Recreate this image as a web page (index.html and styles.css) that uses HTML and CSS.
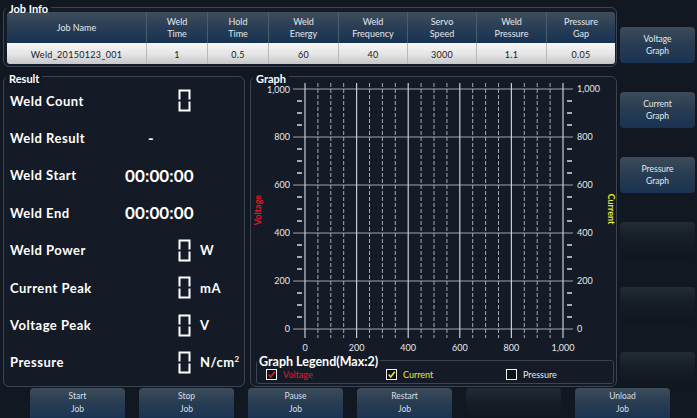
FILE: index.html
```html
<!DOCTYPE html>
<html>
<head>
<meta charset="utf-8">
<link rel="stylesheet" href="styles.css">
</head>
<body>
<div class="screen">
  <div class="main">
    <div class="panel job">
      <div class="ptitle">Job Info</div>
      <div class="jtable">
        <div class="jrow head">
          <div class="c">Job Name</div>
          <div class="c">Weld<br>Time</div>
          <div class="c">Hold<br>Time</div>
          <div class="c">Weld<br>Energy</div>
          <div class="c">Weld<br>Frequency</div>
          <div class="c">Servo<br>Speed</div>
          <div class="c">Weld<br>Pressure</div>
          <div class="c">Pressure<br>Gap</div>
        </div>
        <div class="jrow data">
          <div class="c">Weld_20150123_001</div>
          <div class="c">1</div>
          <div class="c">0.5</div>
          <div class="c">60</div>
          <div class="c">40</div>
          <div class="c">3000</div>
          <div class="c">1.1</div>
          <div class="c">0.05</div>
        </div>
      </div>
    </div>
    <div class="lower">
      <div class="panel result">
        <div class="ptitle">Result</div>
        <div class="rows">
          <div class="r"><span class="lbl">Weld Count</span><span class="val dig"><svg class="seg" viewBox="0 0 13 23"><path d="M1.5 10.5V1.5H11.5V10.5M11.5 12.5V21.5H1.5V12.5"/></svg></span></div>
          <div class="r"><span class="lbl">Weld Result</span><span class="val dash">-</span></div>
          <div class="r"><span class="lbl">Weld Start</span><span class="val time">00:00:00</span></div>
          <div class="r"><span class="lbl">Weld End</span><span class="val time">00:00:00</span></div>
          <div class="r"><span class="lbl">Weld Power</span><span class="val dig"><svg class="seg" viewBox="0 0 13 23"><path d="M1.5 10.5V1.5H11.5V10.5M11.5 12.5V21.5H1.5V12.5"/></svg></span><span class="unit">W</span></div>
          <div class="r"><span class="lbl">Current Peak</span><span class="val dig"><svg class="seg" viewBox="0 0 13 23"><path d="M1.5 10.5V1.5H11.5V10.5M11.5 12.5V21.5H1.5V12.5"/></svg></span><span class="unit">mA</span></div>
          <div class="r"><span class="lbl">Voltage Peak</span><span class="val dig"><svg class="seg" viewBox="0 0 13 23"><path d="M1.5 10.5V1.5H11.5V10.5M11.5 12.5V21.5H1.5V12.5"/></svg></span><span class="unit">V</span></div>
          <div class="r"><span class="lbl">Pressure</span><span class="val dig"><svg class="seg" viewBox="0 0 13 23"><path d="M1.5 10.5V1.5H11.5V10.5M11.5 12.5V21.5H1.5V12.5"/></svg></span><span class="unit">N/cm<sup>2</sup></span></div>
        </div>
      </div>
      <div class="panel graph">
        <div class="ptitle gtitle">Graph</div>
        <svg class="chart" width="365" height="276" viewBox="0 0 365 276">
          <g class="hgrid">
            <line x1="42" y1="9" x2="322" y2="9"/>
            <line x1="42" y1="57" x2="322" y2="57"/>
            <line x1="42" y1="105" x2="322" y2="105"/>
            <line x1="42" y1="153" x2="322" y2="153"/>
            <line x1="42" y1="201" x2="322" y2="201"/>
            <line x1="42" y1="249" x2="322" y2="249"/>
          </g>
          <g class="minor">
            <path d="M46 21h5M46 33h5M46 45h5M46 69h5M46 81h5M46 93h5M46 117h5M46 129h5M46 141h5M46 165h5M46 177h5M46 189h5M46 213h5M46 225h5M46 237h5"/>
            <path d="M316 21h5M316 33h5M316 45h5M316 69h5M316 81h5M316 93h5M316 117h5M316 129h5M316 141h5M316 165h5M316 177h5M316 189h5M316 213h5M316 225h5M316 237h5"/>
          </g>
          <g class="vdash">
            <path d="M66.9 3V258M79.8 3V258M92.7 3V258M118.5 3V258M131.4 3V258M144.3 3V258M170.1 3V258M183 3V258M195.9 3V258M221.7 3V258M234.6 3V258M247.5 3V258M273.3 3V258M286.2 3V258M299.1 3V258"/>
          </g>
          <g class="vsolid">
            <path d="M54 3V258M105.6 3V258M157.2 3V258M208.8 3V258M260.4 3V258M312 3V258"/>
          </g>
          <g class="lab ylab">
            <text x="39" y="12.5">1,000</text>
            <text x="39" y="60">800</text>
            <text x="39" y="108">600</text>
            <text x="39" y="156">400</text>
            <text x="39" y="204">200</text>
            <text x="39" y="252">0</text>
          </g>
          <g class="lab rlab">
            <text x="326" y="12">1,000</text>
            <text x="326" y="60">800</text>
            <text x="326" y="108">600</text>
            <text x="326" y="156">400</text>
            <text x="326" y="204">200</text>
            <text x="326" y="252">0</text>
          </g>
          <g class="lab xlab">
            <text x="54" y="271">0</text>
            <text x="105.6" y="271">200</text>
            <text x="157.2" y="271">400</text>
            <text x="208.8" y="271">600</text>
            <text x="260.4" y="271">800</text>
            <text x="312" y="271">1,000</text>
          </g>
          <text class="atitle volt" transform="translate(10 130) rotate(-90)">Voltage</text>
          <text class="atitle curr" transform="translate(357 129) rotate(90)">Current</text>
        </svg>
        <div class="legend">
          <div class="ltitle">Graph Legend(Max:2)</div>
          <div class="litems">
            <div class="li"><span class="cb"><svg viewBox="0 0 11 11"><path class="ck red" d="M2 5.5L4.5 8.5L9.5 2"/></svg></span><span class="lt red-t">Voltage</span></div>
            <div class="li"><span class="cb"><svg viewBox="0 0 11 11"><path class="ck yel" d="M2 5.5L4.5 8.5L9.5 2"/></svg></span><span class="lt yel-t">Current</span></div>
            <div class="li"><span class="cb"></span><span class="lt wht-t">Pressure</span></div>
          </div>
        </div>
      </div>
    </div>
  </div>
  <div class="side">
    <div class="sbtn">Voltage<br>Graph</div>
    <div class="sbtn">Current<br>Graph</div>
    <div class="sbtn">Pressure<br>Graph</div>
    <div class="sbtn dark"></div>
    <div class="sbtn dark"></div>
    <div class="sbtn dark"></div>
  </div>
  <div class="bottom">
    <div class="bbtn">Start<br>Job</div>
    <div class="bbtn">Stop<br>Job</div>
    <div class="bbtn">Pause<br>Job</div>
    <div class="bbtn">Restart<br>Job</div>
    <div class="bbtn dark"></div>
    <div class="bbtn">Unload<br>Job</div>
  </div>
</div>
</body>
</html>
```
FILE: styles.css
```css
html, body {
  margin: 0;
  padding: 0;
  background: #121822;
}
body {
  width: 697px;
  height: 418px;
  overflow: hidden;
  font-family: Lato, "DejaVu Sans", sans-serif;
  color: #fff;
}
.screen {
  display: grid;
  grid-template-columns: 620px 77px;
  grid-template-rows: 388px 30px;
  width: 697px;
  height: 418px;
}
.main {
  padding: 7px 0 0 3px;
  box-sizing: border-box;
}
.panel {
  border: 1px solid #3a4452;
  border-radius: 6px;
  background: #141b26;
  box-sizing: border-box;
}
.ptitle {
  display: block;
  width: max-content;
  font-weight: 700;
  font-size: 11px;
  line-height: 12px;
  height: 12px;
  padding: 0 3px 0 3px;
  margin: -5px 0 0 2px;
  background: #121822;
  color: #fff;
}
.job {
  width: 614px;
  height: 60px;
}
.jtable {
  margin: -3px 0 0 3px;
  width: 608px;
}
.jrow {
  display: grid;
  grid-template-columns: 139px 61px 61px 70px 69px 69px 70px 69px;
}
.head {
  height: 31px;
  background: linear-gradient(#3f4e5d 0%, #2b3f55 45%, #163252 100%);
  border-radius: 3px 3px 0 0;
}
.head .c {
  color: #e3e8ee;
  font-size: 9px;
  line-height: 12px;
  text-align: center;
  display: flex;
  align-items: center;
  justify-content: center;
  border-left: 1px solid #4d5d6e;
}
.head .c:first-child, .data .c:first-child {
  border-left: none;
}
.data {
  height: 21px;
  background: linear-gradient(#f7f7f7 0%, #e6e6e6 50%, #c6c7c9 100%);
  border-radius: 0 0 3px 3px;
}
.data .c {
  color: #1b1b1b;
  font-size: 9px;
  text-align: center;
  display: flex;
  align-items: center;
  justify-content: center;
  border-left: 1px solid #b8babd;
  padding-top: 1px;
  letter-spacing: 0.3px;
}
.lower {
  display: flex;
  gap: 5px;
  margin-top: 9px;
}
.result {
  width: 242px;
  height: 311px;
}
.result .ptitle, .graph .ptitle {
  margin-top: -4px;
}
.graph .gtitle {
  line-height: 11px;
  height: 11px;
  margin-bottom: 1px;
}
.rows {
  display: grid;
  grid-template-rows: repeat(8, 37.4px);
  margin-top: -3px;
}
.r {
  display: flex;
  align-items: center;
  padding-left: 6px;
}
.lbl {
  width: 115px;
  font-weight: 700;
  font-size: 13px;
  letter-spacing: 0.5px;
  color: #fff;
}
.val {
  font-weight: 700;
}
.dig {
  margin-left: 53px;
  width: 13px;
  height: 23px;
}
.seg {
  width: 13px;
  height: 23px;
  display: block;
}
.seg path {
  fill: none;
  stroke: #fff;
  stroke-width: 2;
}
.dash {
  margin-left: 23px;
  font-size: 15px;
}
.time {
  margin-left: 0;
  font-size: 17px;
  letter-spacing: 0.1px;
}
.unit {
  margin-left: 9px;
  font-weight: 700;
  font-size: 13px;
  letter-spacing: 0.5px;
}
.unit sup {
  font-size: 8px;
  vertical-align: 5px;
  line-height: 0;
}
.graph {
  width: 367px;
  height: 311px;
  display: flex;
  flex-direction: column;
}
.chart {
  display: block;
  margin-top: -5px;
}
.hgrid line {
  stroke: #9ea3a9;
  stroke-width: 1;
}
.minor path {
  stroke: #d8dadd;
  stroke-width: 1.3;
}
.vdash path {
  stroke: #a5aab0;
  stroke-width: 1;
  stroke-dasharray: 4 2;
}
.vsolid path {
  stroke: #c9cdd2;
  stroke-width: 1.2;
}
.lab text {
  font-family: Lato, "DejaVu Sans", sans-serif;
  font-size: 9px;
  fill: #e6e8ea;
}
.ylab text {
  text-anchor: end;
}
.xlab text {
  text-anchor: middle;
}
.atitle {
  font-family: Lato, "DejaVu Sans", sans-serif;
  font-size: 9px;
  font-weight: 700;
  text-anchor: middle;
}
.volt { fill: #e01a22; }
.curr { fill: #e8e82c; }
.legend {
  margin: 4px 0 0 5px;
  width: 358px;
  height: 24px;
  border: 1px solid #3a4452;
  border-radius: 3px;
  box-sizing: border-box;
}
.ltitle {
  display: block;
  width: max-content;
  font-weight: 700;
  font-size: 12.5px;
  line-height: 12px;
  height: 12px;
  margin: -5px 0 0 0;
  padding: 0 2px;
  background: #141b26;
}
.litems {
  display: grid;
  grid-template-columns: 120px 120px 100px;
  padding-left: 9px;
  margin-top: 1px;
}
.li {
  display: flex;
  align-items: center;
  gap: 6px;
  height: 11px;
}
.cb {
  width: 9px;
  height: 9px;
  border: 1px solid #f0f0f0;
  background: #0c1118;
  display: block;
}
.cb svg {
  width: 9px;
  height: 9px;
  display: block;
}
.ck {
  fill: none;
  stroke-width: 2;
}
.ck.red { stroke: #e01a22; }
.ck.yel { stroke: #e8e82c; }
.lt {
  font-size: 9px;
}
.red-t { color: #e01a22; }
.yel-t { color: #e8e82c; }
.wht-t { color: #e8e8e8; }
.side {
  display: flex;
  flex-direction: column;
  gap: 29px;
  padding-top: 27px;
}
.sbtn {
  width: 75px;
  height: 36px;
  border-radius: 4px;
  background: linear-gradient(#3c4c5b 0%, #293d52 45%, #1a3352 100%);
  color: #e2e8ee;
  font-size: 8.5px;
  line-height: 12px;
  display: flex;
  align-items: center;
  justify-content: center;
  text-align: center;
}
.sbtn.dark, .bbtn.dark {
  background: linear-gradient(#232c35 0%, #161e27 40%, #0f161e 100%);
}
.bottom {
  grid-column: 1 / 3;
  display: flex;
  gap: 14px;
  padding-left: 30px;
}
.bbtn {
  width: 95px;
  height: 32px;
  border-radius: 4px 4px 0 0;
  background: linear-gradient(#3c4c5b 0%, #293d52 45%, #1a3352 100%);
  color: #d8dfe6;
  font-size: 8.5px;
  line-height: 13px;
  text-align: center;
  padding-top: 2px;
  box-sizing: border-box;
}
```
